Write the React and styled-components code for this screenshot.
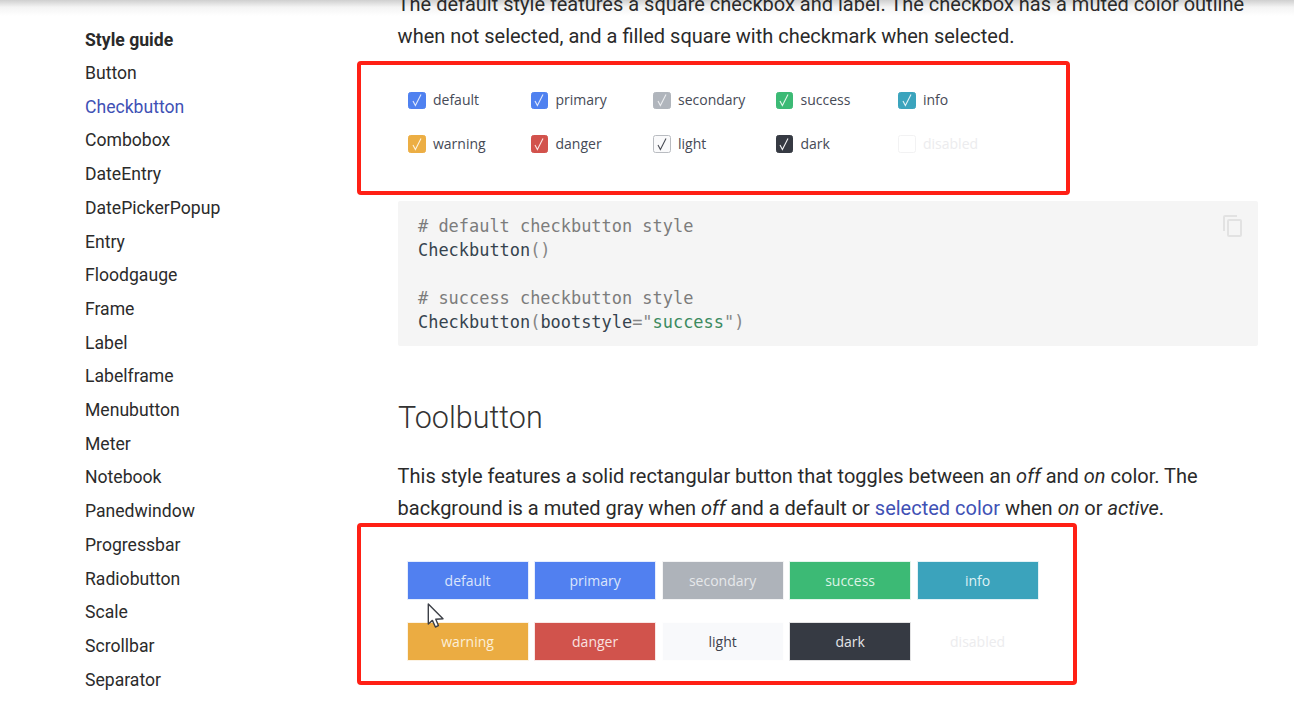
import styled, { createGlobalStyle } from 'styled-components'

const GlobalStyle = createGlobalStyle`
  html, body {
    margin: 0;
    height: 701px;
    overflow: hidden;
    background: #fff;
  }
  * { box-sizing: border-box; }
`

const Page = styled.div`
  position: relative;
  width: 1294px;
  height: 701px;
  overflow: hidden;
  display: flex;
  font-family: Roboto, "Liberation Sans", sans-serif;
  color: rgba(0,0,0,0.87);
`

const TopShadow = styled.div`
  position: absolute;
  inset: 0 0 auto 0;
  height: 16px;
  background: linear-gradient(#cfcfcf, #f4f4f4 45%, #ffffff);
`

const Sidebar = styled.nav`
  position: relative;
  width: 398px;
  flex: none;
  padding: 24.4px 0 0 85px;
`

const NavTitle = styled.div`
  font-size: 17.6px;
  font-weight: 700;
  line-height: 32.65px;
  color: #2a2a2a;
`

const NavItem = styled.div`
  font-size: 17.6px;
  line-height: 33.7px;
  color: ${({ $active }) => ($active ? '#3f51b5' : '#2b2b2b')};
`

const Content = styled.main`
  position: relative;
  width: 860px;
  flex: none;
  margin-top: -12px;
`

const Para = styled.p`
  margin: ${({ $top }) => $top || 0}px 0 0 -0.4px;
  font-size: 20px;
  line-height: 32px;
  color: #2a2a2a;

  a { color: #3f51b5; text-decoration: none; }
`

const Figure = styled.div`
  margin-left: -41px;
  width: ${({ $width }) => $width}px;
  height: ${({ $height }) => $height}px;
  margin-top: ${({ $top }) => $top}px;
  border: 4px solid #ff2015;
  border-radius: 4px;
  background: #fff;
  padding: ${({ $pad }) => $pad};
  font-family: "Open Sans", sans-serif;
  font-size: 14px;
`

const CheckGrid = styled.div`
  display: grid;
  grid-template-columns: repeat(5, 122.5px);
  grid-auto-rows: 43.7px;
  align-items: center;
`

const CheckItem = styled.div`
  display: flex;
  align-items: center;
  gap: 7.4px;
  color: ${({ $disabled }) => ($disabled ? '#ececee' : '#464a56')};
`

const CheckLabel = styled.span`
  margin-bottom: 2px;
`

const Box = styled.span`
  width: 17.6px;
  height: 17.6px;
  flex: none;
  border-radius: 2.5px;
  background: ${({ $bg }) => $bg};
  border: 1px solid ${({ $line }) => $line};
  display: flex;
  align-items: center;
  justify-content: center;
`

const ButtonGrid = styled.div`
  display: grid;
  grid-template-columns: repeat(5, 120px);
  column-gap: 7.5px;
  row-gap: 24.9px;
`

const ToolButton = styled.div`
  height: 36.6px;
  display: flex;
  align-items: center;
  justify-content: center;
  background: ${({ $bg }) => $bg};
  color: ${({ $fg }) => $fg};
  box-shadow: 0 0 0 1px ${({ $bg }) => $bg}24;
`

const CodeBlock = styled.pre`
  position: relative;
  margin: 6px 0 0;
  height: 145px;
  padding: 13px 20px;
  background: #f5f5f5;
  border-radius: 2px;
  font-family: "DejaVu Sans Mono", "Liberation Mono", monospace;
  font-size: 16.95px;
  line-height: 24px;
  color: #36434e;
`

const Comment = styled.span`
  color: #7c7c7c;
`

const Str = styled.span`
  color: #3b8a5f;
`

const Punct = styled.span`
  color: #868686;
`

const CopyIcon = styled.svg`
  position: absolute;
  top: 13px;
  right: 13px;
  width: 24px;
  height: 24px;
`

const Heading = styled.h2`
  margin: 53px 0 0;
  font-size: 30.5px;
  font-weight: 300;
  line-height: 38px;
  color: #333;
`

const Cursor = styled.svg`
  position: absolute;
  left: 427px;
  top: 603px;
  width: 18px;
  height: 26px;
`

const navItems = [
  'Button', 'Checkbutton', 'Combobox', 'DateEntry', 'DatePickerPopup', 'Entry',
  'Floodgauge', 'Frame', 'Label', 'Labelframe', 'Menubutton', 'Meter', 'Notebook',
  'Panedwindow', 'Progressbar', 'Radiobutton', 'Scale', 'Scrollbar', 'Separator',
]

const checks = [
  { name: 'default', bg: '#4f81f0', tick: '#dfe8fc' },
  { name: 'primary', bg: '#4f81f0', tick: '#dfe8fc' },
  { name: 'secondary', bg: '#b0b5bc', tick: '#eceef0' },
  { name: 'success', bg: '#3cba75', tick: '#e2f6ea' },
  { name: 'info', bg: '#3ba4bd', tick: '#e2f2f6' },
  { name: 'warning', bg: '#ecae44', tick: '#fdf2de' },
  { name: 'danger', bg: '#d2524c', tick: '#fae4e2' },
  { name: 'light', bg: '#fafafb', line: '#b9bcc1', tick: '#4a4d55' },
  { name: 'dark', bg: '#363a43', tick: '#f2f2f4' },
  { name: 'disabled', bg: '#fff', line: '#f2f2f3', disabled: true },
]

const buttons = [
  { name: 'default', bg: '#5180f0', fg: '#dbe5fb' },
  { name: 'primary', bg: '#5180f0', fg: '#dbe5fb' },
  { name: 'secondary', bg: '#aeb3ba', fg: '#e6e8ea' },
  { name: 'success', bg: '#3cba75', fg: '#dcf4e6' },
  { name: 'info', bg: '#3ba3bc', fg: '#dff1f5' },
  { name: 'warning', bg: '#ebac42', fg: '#fcefd8' },
  { name: 'danger', bg: '#d1534c', fg: '#f9e2e0' },
  { name: 'light', bg: '#f8f9fb', fg: '#3e424d' },
  { name: 'dark', bg: '#363a43', fg: '#e4e5e7' },
  { name: 'disabled', bg: '#ffffff', fg: '#ececee' },
]

const Tick = ({ color }) => (
  <svg width="14" height="15" viewBox="0 0 14 15" fill="none">
    <path d="M3 8 L5.4 12.6 L11 1.6" stroke={color} strokeWidth="1.1" />
  </svg>
)

export default function App() {
  return (
    <Page>
      <GlobalStyle />
      <TopShadow />
      <Sidebar>
        <NavTitle>Style guide</NavTitle>
        {navItems.map((item) => (
          <NavItem key={item} $active={item === 'Checkbutton'}>{item}</NavItem>
        ))}
      </Sidebar>
      <Content>
        <Para>
          The default style features a square checkbox and label. The checkbox has a muted color outline
          when not selected, and a filled square with checkmark when selected.
        </Para>
        <Figure $width={713} $height={134} $top={9} $pad="13.5px 0 0 47px">
          <CheckGrid>
            {checks.map((c) => (
              <CheckItem key={c.name} $disabled={c.disabled}>
                <Box $bg={c.bg} $line={c.line || c.bg}>
                  {c.tick && <Tick color={c.tick} />}
                </Box>
                <CheckLabel>{c.name}</CheckLabel>
              </CheckItem>
            ))}
          </CheckGrid>
        </Figure>
        <CodeBlock>
          <Comment># default checkbutton style</Comment>{'\n'}
          Checkbutton<Punct>()</Punct>{'\n\n'}
          <Comment># success checkbutton style</Comment>{'\n'}
          Checkbutton<Punct>(</Punct>bootstyle<Punct>=</Punct><Punct>"</Punct><Str>success</Str><Punct>")</Punct>
          <CopyIcon viewBox="0 0 24 24" fill="#e2e2e2">
            <path d="M19 21H8V7h11m0-2H8a2 2 0 0 0-2 2v14a2 2 0 0 0 2 2h11a2 2 0 0 0 2-2V7a2 2 0 0 0-2-2m-3-4H4a2 2 0 0 0-2 2v14h2V3h12V1z" />
          </CopyIcon>
        </CodeBlock>
        <Heading>Toolbutton</Heading>
        <Para $top={23}>
          This style features a solid rectangular button that toggles between an <em>off</em> and <em>on</em> color. The
          background is a muted gray when <em>off</em> and a default or <a href="#c">selected color</a> when <em>on</em> or <em>active</em>.
        </Para>
        <Figure $width={720} $height={162} $top={-1} $pad="35px 0 0 46.6px">
          <ButtonGrid>
            {buttons.map((b) => (
              <ToolButton key={b.name} $bg={b.bg} $fg={b.fg}>{b.name}</ToolButton>
            ))}
          </ButtonGrid>
        </Figure>
      </Content>
      <Cursor viewBox="0 0 18 26">
        <path d="M1.3 1 L1.3 21 L5.4 17.4 L8.4 24 L11.4 22.6 L8.8 16.2 L16 15.7 Z" fill="#fff" stroke="#3c3f46" strokeWidth="1.4" strokeLinejoin="round" />
      </Cursor>
    </Page>
  )
}
